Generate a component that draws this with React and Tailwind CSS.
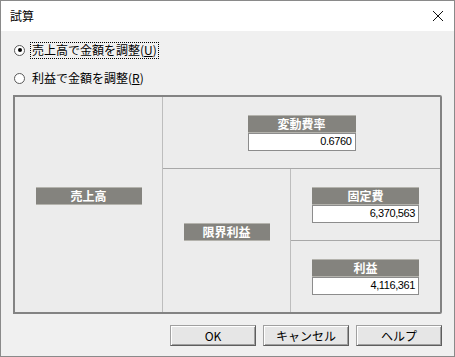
import React from 'react';

const jp = { fontFamily: '"Noto Sans CJK JP", "Noto Sans", sans-serif' };

// gray caption bar, optionally with a white value box under it
const Field = ({ label, value, width, hideValue }) => (
  <div className="flex flex-col" style={{ width }}>
    <div className="h-[18px] bg-[#84837e] border-y border-[#b4b3ad] flex items-center justify-center text-white text-[12px] font-bold leading-none">
      {label}
    </div>
    <div className={`h-[18px] flex items-center justify-end pr-[3px] text-[11px] leading-none tracking-[-0.4px] text-black ${hideValue ? '' : 'bg-white border border-[#8c8c8c]'}`}
      style={{ fontFamily: '"Liberation Sans", Arial, sans-serif' }}>
      {hideValue ? '' : value}
    </div>
  </div>
);

const Radio = ({ checked, children, focused }) => (
  <div className="flex items-center h-[18px]">
    <div className="w-[11px] h-[11px] rounded-full border border-[#5a5a5a] bg-white flex items-center justify-center">
      {checked && <div className="w-[4px] h-[4px] rounded-full bg-black" />}
    </div>
    <div className={`ml-[5px] px-[1px] h-[17px] flex items-center text-[12px] leading-none text-black ${focused ? 'border border-dotted border-black' : 'border border-transparent'}`}>
      {children}
    </div>
  </div>
);

const Button = ({ children }) => (
  <button className="w-[86px] h-[21px] bg-[#e6e6e6] border border-t-[#a0a0a0] border-l-[#a0a0a0] border-r-[#5e5e5e] border-b-[#5e5e5e] shadow-[inset_1px_1px_0_#ffffff,inset_-1px_-1px_0_#a0a0a0] text-[12px] leading-none text-black flex items-center justify-center">
    {children}
  </button>
);

export default function App() {
  return (
    <div className="w-[455px] h-[357px] border border-[#8a8a8a] bg-[#f0f0f0] flex flex-col overflow-hidden" style={jp}>
      {/* title bar */}
      <div className="h-[30px] bg-white flex items-center justify-between pl-[9px] pr-[10px]">
        <span className="text-[12px] text-black leading-none">試算</span>
        <svg width="12" height="12" viewBox="0 0 12 12">
          <path d="M1 1 L11 11 M11 1 L1 11" stroke="#111" strokeWidth="1" />
        </svg>
      </div>

      <div className="flex flex-col pl-[13px]">
        <div className="mt-[10px]">
          <Radio checked focused>売上高で金額を調整(<u>U</u>)</Radio>
        </div>
        <div className="mt-[10px]">
          <Radio>利益で金額を調整(<u>R</u>)</Radio>
        </div>
      </div>

      {/* break-even panel */}
      <div className="mt-[8px] ml-[12px] w-[429px] h-[219px] border-2 border-[#838383] rounded-tr-[2px] rounded-br-[2px] bg-[#ececec] flex">
        <div className="w-[147px] flex items-center justify-center">
          <Field label="売上高" width={106} hideValue />
        </div>
        <div className="w-px bg-[#bdbdbd]" />
        <div className="flex-1 flex flex-col">
          <div className="h-[71px] flex items-center justify-center">
            <Field label="変動費率" value="0.6760" width={108} />
          </div>
          <div className="h-px bg-[#a8a8a8]" />
          <div className="flex-1 flex">
            <div className="w-[127px] flex items-center justify-center">
              <Field label="限界利益" width={86} hideValue />
            </div>
            <div className="w-px bg-[#bdbdbd]" />
            <div className="flex-1 flex flex-col">
              <div className="h-[71px] flex items-center justify-center">
                <Field label="固定費" value="6,370,563" width={107} />
              </div>
              <div className="h-px bg-[#a8a8a8]" />
              <div className="flex-1 flex items-center justify-center">
                <Field label="利益" value="4,116,361" width={107} />
              </div>
            </div>
          </div>
        </div>
      </div>

      <div className="mt-[11px] flex justify-end gap-[7px] pr-[12px]">
        <Button>OK</Button>
        <Button>キャンセル</Button>
        <Button>ヘルプ</Button>
      </div>
    </div>
  );
}
